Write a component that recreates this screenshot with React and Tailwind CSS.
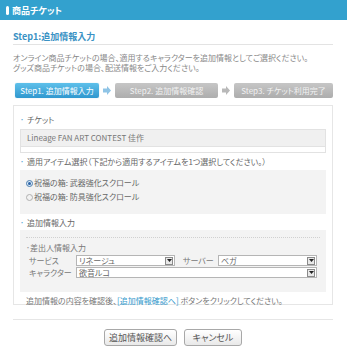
import React from 'react';

const font = { fontFamily: '"Noto Sans CJK JP", "Noto Sans", sans-serif' };

function Arrow({ color }) {
  return (
    <svg width="8" height="9" viewBox="0 0 8 9" className="shrink-0">
      <path d="M0 2.5h4V0l4 4.5-4 4.5V6.5H0z" fill={color} />
    </svg>
  );
}

function Select({ value, className }) {
  return (
    <div className={`flex h-[11px] items-center border border-[#b5b5b5] bg-white ${className}`}>
      <span className="flex-1 pl-[2px] text-[8px] leading-[9px] text-[#666]">{value}</span>
      <span className="mr-[1px] flex h-[8px] w-[8px] items-center justify-center border border-[#8a8a8a] bg-[#e8e8e8]">
        <svg width="5" height="3" viewBox="0 0 5 3">
          <path d="M0 0h5L2.5 3z" fill="#222" />
        </svg>
      </span>
    </div>
  );
}

function Radio({ checked, label }) {
  return (
    <div className="flex h-[14px] items-center gap-[1px]">
      <span
        className={`flex h-[7px] w-[7px] items-center justify-center rounded-full border ${
          checked ? 'border-[#4d7fb0] bg-[#dbe9f5]' : 'border-[#b0b0b0] bg-[#f2f2f2]'
        }`}
      >
        {checked && <span className="h-[3px] w-[3px] rounded-full bg-[#2a63a8]" />}
      </span>
      <span className="text-[8px] leading-[10px] text-[#666]">{label}</span>
    </div>
  );
}

function Bullet({ children, className = '' }) {
  return (
    <div className={`flex h-[12px] items-center whitespace-nowrap text-[8px] leading-[12px] text-[#666] ${className}`}>
      <span className="w-[7px] text-[#5aa8d6]">･</span>
      {children}
    </div>
  );
}

export default function App() {
  return (
    <div className="h-[350px] w-[347px] overflow-hidden bg-white leading-[12px] [font-feature-settings:'palt']" style={font}>
      {/* header */}
      <div className="flex h-[20px] items-center bg-[#33a1ce] pl-[6px]">
        <span className="mr-[3px] h-[9px] w-[3px] rounded-full bg-white" />
        <span className="text-[9px] font-bold leading-none text-white">商品チケット</span>
      </div>

      <div className="ml-[13px] mr-[14px]">
        <div className="h-[25px] border-b border-[#e3e3e3] pt-[10px] text-[9px] font-bold leading-[14px] text-[#3a92c4]">
          Step1:追加情報入力
        </div>

        <div className="mt-[8px] whitespace-nowrap text-[8px] leading-[10px] text-[#888]">
          <p>オンライン商品チケットの場合、適用するキャラクターを追加情報としてご選択ください。</p>
          <p>グッズ商品チケットの場合、配送情報をご入力ください。</p>
        </div>

        {/* steps */}
        <div className="mt-[10px] flex h-[15px] items-center pl-[2px]">
          <div className="flex h-full w-[84px] items-center justify-center whitespace-nowrap rounded-[2px] bg-gradient-to-b from-[#5ec0ea] to-[#2f98cf] text-[8px] leading-none text-white shadow-[0_0_1px_#9cd]">
            Step1. 追加情報入力
          </div>
          <div className="mx-[4px]"><Arrow color="#8fc4e6" /></div>
          <div className="flex h-full w-[103px] items-center justify-center whitespace-nowrap rounded-[2px] bg-gradient-to-b from-[#c6c6c6] to-[#adadad] text-[8px] leading-none text-[#f2f2f2]">
            Step2. 追加情報確認
          </div>
          <div className="mx-[4px]"><Arrow color="#b9b9b9" /></div>
          <div className="flex h-full w-[99px] items-center justify-center whitespace-nowrap rounded-[2px] bg-gradient-to-b from-[#c6c6c6] to-[#adadad] text-[8px] leading-none text-[#f2f2f2]">
            Step3. チケット利用完了
          </div>
        </div>

        {/* panel */}
        <div className="mt-[7px] h-[200px] border border-[#e6e6e6] px-[6px] pt-[8px]">
          <Bullet>チケット</Bullet>
          <div className="mt-[3px] border border-[#e2e2e2]">
            <div className="flex h-[16px] items-center bg-[#f0f0f0] pl-[6px] text-[8px] leading-none text-[#777]">
              Lineage FAN ART CONTEST 佳作
            </div>
            <div className="h-[6px] border-t border-[#e2e2e2] bg-white" />
          </div>

          <Bullet className="mt-[3px]">適用アイテム選択（下記から適用するアイテムを1つ選択してください。）</Bullet>
          <div className="mt-[2px] h-[44px] bg-[#f3f3f3] pl-[6px] pt-[6px]">
            <Radio checked label="祝福の箱: 武器強化スクロール" />
            <Radio label="祝福の箱: 防具強化スクロール" />
          </div>

          <Bullet className="mt-[3px]">追加情報入力</Bullet>
          <div className="mt-[1px] h-[62px] bg-[#f3f3f3] px-[6px] pt-[7px]">
            <div className="border-t border-dotted border-[#d0d0d0]" />
            <div className="mt-[4px] flex h-[12px] items-center text-[8px] leading-[12px] text-[#777]">
              <span className="w-[4px] text-[#999]">･</span>差出人情報入力
            </div>
            <div className="mt-[1px] flex h-[11px] items-center">
              <span className="w-[50px] whitespace-nowrap pl-[3px] text-[8px] leading-[11px] text-[#777]">サービス</span>
              <Select value="リネージュ" className="w-[99px]" />
              <span className="ml-[8px] w-[35px] whitespace-nowrap text-[8px] leading-[11px] text-[#777]">サーバー</span>
              <Select value="ベガ" className="w-[99px]" />
            </div>
            <div className="mt-[1px] flex h-[11px] items-center">
              <span className="w-[50px] whitespace-nowrap pl-[3px] text-[8px] leading-[11px] text-[#777]">キャラクター</span>
              <Select value="欲音ルコ" className="w-[241px]" />
            </div>
          </div>

          <p className="mt-[3px] whitespace-nowrap pl-[6px] text-[8px] leading-[12px] text-[#777]">
            追加情報の内容を確認後、<span className="text-[#3399cc]">[追加情報確認へ]</span> ボタンをクリックしてください。
          </p>
        </div>

        <div className="mt-[14px] border-t border-[#e6e6e6]" />

        <div className="mt-[9px] flex justify-center gap-[7px]">
          <button className="h-[17px] w-[73px] rounded-[3px] border border-[#a8a8a8] bg-gradient-to-b from-white to-[#e9e9e9] text-[9px] leading-none text-[#555]">
            追加情報確認へ
          </button>
          <button className="h-[17px] w-[58px] rounded-[3px] border border-[#a8a8a8] bg-gradient-to-b from-white to-[#e9e9e9] text-[9px] leading-none text-[#555]">
            キャンセル
          </button>
        </div>
      </div>
    </div>
  );
}
